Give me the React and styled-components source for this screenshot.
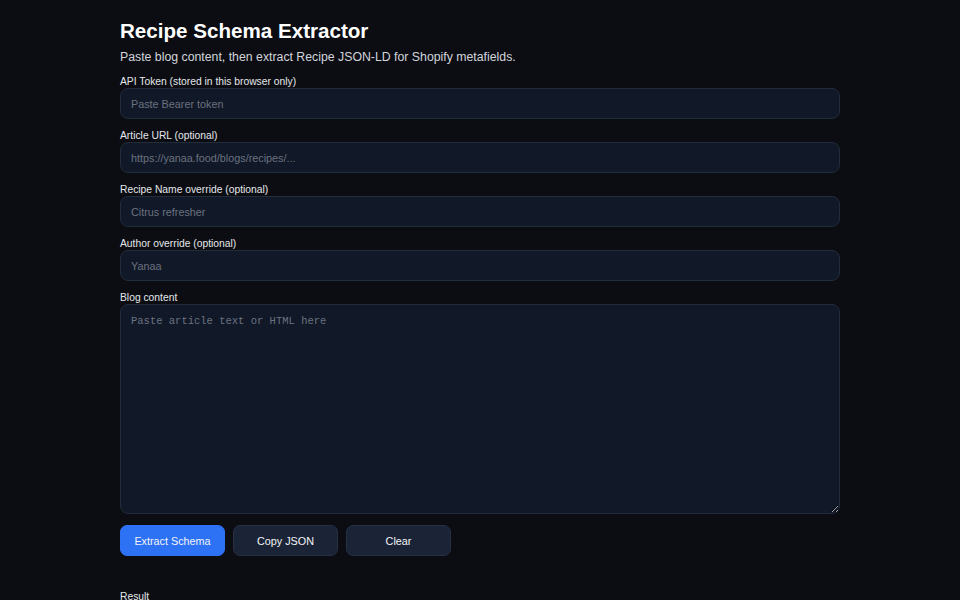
import React from 'react'
import styled, { createGlobalStyle } from "styled-components";

const GlobalStyle = createGlobalStyle`
  html, body {
    margin: 0;
    background: #0b0d12;
    color: #e5e7eb;
    font-family: "Liberation Sans", Arial, sans-serif;
  }
`;

const Page = styled.main`
  width: 720px;
  margin: 0 auto;
  padding-top: 18px;
  display: flex;
  flex-direction: column;
`;

const Title = styled.h1`
  margin: 0;
  font-size: 20.6px;
  font-weight: 700;
  color: #ffffff;
  line-height: 26px;
`;

const Subtitle = styled.p`
  margin: 5px 0 0;
  font-size: 12.3px;
  line-height: 16px;
  color: #d1d5db;
`;

const Form = styled.div`
  margin-top: 11px;
  display: flex;
  flex-direction: column;
  gap: 11px;
`;

const Field = styled.label`
  display: flex;
  flex-direction: column;
`;

const Label = styled.span`
  font-size: 10.3px;
  line-height: 12px;
  color: #e5e7eb;
`;

const Input = styled.input`
  box-sizing: border-box;
  height: 31px;
  width: 100%;
  padding: 0 10px;
  background: #111827;
  border: 1px solid #232c3b;
  border-radius: 8px;
  color: #e5e7eb;
  font-family: inherit;
  font-size: 10.8px;
  outline: none;

  &::placeholder {
    color: #6b7280;
  }
`;

const TextArea = styled.textarea`
  box-sizing: border-box;
  height: 210px;
  width: 100%;
  padding: 10px;
  background: #111827;
  border: 1px solid #232c3b;
  border-radius: 8px;
  color: #e5e7eb;
  font-family: "Liberation Mono", "Courier New", monospace;
  font-size: 10.5px;
  resize: vertical;
  outline: none;

  &::placeholder {
    color: #6b7280;
  }
`;

const Actions = styled.div`
  margin-top: 11px;
  display: flex;
  gap: 8px;
`;

const Button = styled.button`
  box-sizing: border-box;
  width: 105px;
  height: 31px;
  border-radius: 7px;
  border: 1px solid ${p => p.$primary ? "#2d72f5" : "#263043"};
  background: ${p => p.$primary ? "#2d72f5" : "#1b2436"};
  color: #f3f4f6;
  font-family: inherit;
  font-size: 10.8px;
  cursor: pointer;
`;

const ResultLabel = styled.div`
  margin-top: 35px;
  font-size: 10.3px;
  line-height: 12px;
  color: #e5e7eb;
`;

const fields = [
  { label: "API Token (stored in this browser only)", placeholder: "Paste Bearer token" },
  { label: "Article URL (optional)", placeholder: "https://yanaa.food/blogs/recipes/..." },
  { label: "Recipe Name override (optional)", placeholder: "Citrus refresher" },
  { label: "Author override (optional)", placeholder: "Yanaa" },
];

const App = () => {
  return (
    <>
      <GlobalStyle />
      <Page>
        <Title>Recipe Schema Extractor</Title>
        <Subtitle>Paste blog content, then extract Recipe JSON-LD for Shopify metafields.</Subtitle>
        <Form>
          {fields.map(f => (
            <Field key={f.label}>
              <Label>{f.label}</Label>
              <Input type="text" placeholder={f.placeholder} />
            </Field>
          ))}
          <Field>
            <Label>Blog content</Label>
            <TextArea placeholder="Paste article text or HTML here" />
          </Field>
        </Form>
        <Actions>
          <Button $primary>Extract Schema</Button>
          <Button>Copy JSON</Button>
          <Button>Clear</Button>
        </Actions>
        <ResultLabel>Result</ResultLabel>
      </Page>
    </>
  )
}

export default App
